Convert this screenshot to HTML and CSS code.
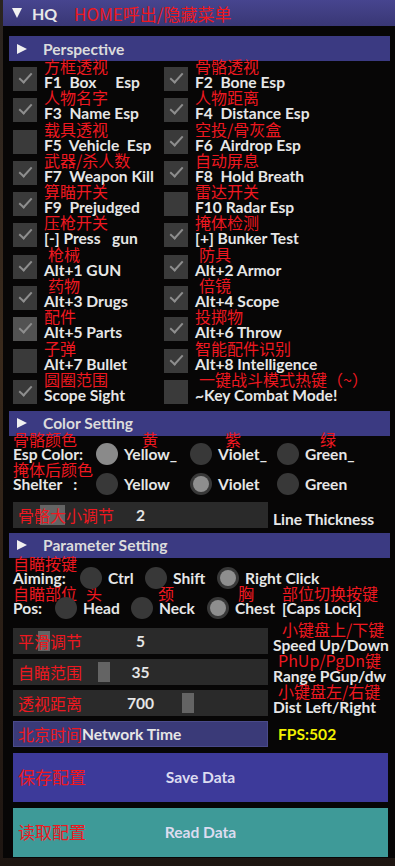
FILE: index.html
```html
<!DOCTYPE html>
<html lang="zh">
<head>
<meta charset="utf-8">
<title>HQ</title>
<link rel="stylesheet" href="styles.css">
</head>
<body>
<div class="window">
  <div class="titlebar">
    <span class="tri-down"></span>
    <span class="title">HQ</span>
    <span class="note title-note">HOME呼出/隐藏菜单</span>
  </div>
  <div class="content">
    <div class="header"><span class="tri-right"></span><span>Perspective</span></div>
    <div class="checks">
      <div class="cell"><span class="box on"></span><div class="stack"><span class="note">方框透视</span><span class="txt">F1  Box     Esp</span></div></div>
      <div class="cell"><span class="box on"></span><div class="stack"><span class="note">骨骼透视</span><span class="txt">F2  Bone Esp</span></div></div>
      <div class="cell"><span class="box on"></span><div class="stack"><span class="note">人物名字</span><span class="txt">F3  Name Esp</span></div></div>
      <div class="cell"><span class="box on"></span><div class="stack"><span class="note">人物距离</span><span class="txt">F4  Distance Esp</span></div></div>
      <div class="cell"><span class="box"></span><div class="stack"><span class="note">载具透视</span><span class="txt">F5  Vehicle  Esp</span></div></div>
      <div class="cell"><span class="box on"></span><div class="stack"><span class="note">空投/骨灰盒</span><span class="txt">F6  Airdrop Esp</span></div></div>
      <div class="cell"><span class="box on"></span><div class="stack"><span class="note">武器/杀人数</span><span class="txt">F7  Weapon Kill</span></div></div>
      <div class="cell"><span class="box on"></span><div class="stack"><span class="note">自动屏息</span><span class="txt">F8  Hold Breath</span></div></div>
      <div class="cell"><span class="box on"></span><div class="stack"><span class="note">算瞄开关</span><span class="txt">F9  Prejudged</span></div></div>
      <div class="cell"><span class="box"></span><div class="stack"><span class="note">雷达开关</span><span class="txt">F10 Radar Esp</span></div></div>
      <div class="cell"><span class="box on"></span><div class="stack"><span class="note">压枪开关</span><span class="txt">[-] Press   gun</span></div></div>
      <div class="cell"><span class="box on"></span><div class="stack"><span class="note">掩体检测</span><span class="txt">[+] Bunker Test</span></div></div>
      <div class="cell"><span class="box on"></span><div class="stack"><span class="note ind">枪械</span><span class="txt">Alt+1 GUN</span></div></div>
      <div class="cell"><span class="box on"></span><div class="stack"><span class="note ind">防具</span><span class="txt">Alt+2 Armor</span></div></div>
      <div class="cell"><span class="box on"></span><div class="stack"><span class="note ind">药物</span><span class="txt">Alt+3 Drugs</span></div></div>
      <div class="cell"><span class="box on"></span><div class="stack"><span class="note ind">倍镜</span><span class="txt">Alt+4 Scope</span></div></div>
      <div class="cell"><span class="box on hover"></span><div class="stack"><span class="note">配件</span><span class="txt">Alt+5 Parts</span></div></div>
      <div class="cell"><span class="box on"></span><div class="stack"><span class="note">投掷物</span><span class="txt">Alt+6 Throw</span></div></div>
      <div class="cell"><span class="box"></span><div class="stack"><span class="note">子弹</span><span class="txt">Alt+7 Bullet</span></div></div>
      <div class="cell"><span class="box on"></span><div class="stack"><span class="note">智能配件识别</span><span class="txt">Alt+8 Intelligence</span></div></div>
      <div class="cell"><span class="box on"></span><div class="stack"><span class="note">圆圈范围</span><span class="txt">Scope Sight</span></div></div>
      <div class="cell"><span class="box"></span><div class="stack"><span class="note ind">一键战斗模式热键（~）</span><span class="txt">~Key Combat Mode!</span></div></div>
    </div>

    <div class="header h-color"><span class="tri-right"></span><span>Color Setting</span></div>
    <div class="radios color-rows">
      <div class="stack"><span class="note">骨骼颜色</span><span class="txt">Esp Color:</span></div>
      <div class="stack"><span class="note off-y">黄</span><span class="opt"><span class="dot sel-full"></span><span class="txt">Yellow_</span></span></div>
      <div class="stack"><span class="note off-v">紫</span><span class="opt"><span class="dot"></span><span class="txt">Violet_</span></span></div>
      <div class="stack"><span class="note off-g">绿</span><span class="opt"><span class="dot"></span><span class="txt">Green_</span></span></div>
      <div class="stack"><span class="note">掩体后颜色</span><span class="txt">Shelter &nbsp;&nbsp;:</span></div>
      <div class="stack"><span class="note"></span><span class="opt"><span class="dot"></span><span class="txt">Yellow</span></span></div>
      <div class="stack"><span class="note"></span><span class="opt"><span class="dot sel"></span><span class="txt">Violet</span></span></div>
      <div class="stack"><span class="note"></span><span class="opt"><span class="dot"></span><span class="txt">Green</span></span></div>
    </div>
    <div class="srow first-slider">
      <div class="frame"><span class="grab" style="left:27px"></span><span class="note fnote">骨骼大小调节</span><span class="val">2</span></div>
      <div class="rcell"><span class="txt">Line Thickness</span></div>
    </div>

    <div class="header h-param"><span class="tri-right"></span><span>Parameter Setting</span></div>
    <div class="radios aim-rows">
      <div class="stack"><span class="note">自瞄按键</span><span class="txt">Aiming:</span></div>
      <div class="stack"><span class="note"></span><span class="opt"><span class="dot"></span><span class="txt">Ctrl</span></span></div>
      <div class="stack"><span class="note"></span><span class="opt"><span class="dot"></span><span class="txt">Shift</span></span></div>
      <div class="stack"><span class="note"></span><span class="opt"><span class="dot sel"></span><span class="txt">Right Click</span></span></div>
    </div>
    <div class="radios pos-rows">
      <div class="stack"><span class="note">自瞄部位</span><span class="txt">Pos:</span></div>
      <div class="stack"><span class="note off-h">头</span><span class="opt"><span class="dot"></span><span class="txt">Head</span></span></div>
      <div class="stack"><span class="note off-n">颈</span><span class="opt"><span class="dot"></span><span class="txt">Neck</span></span></div>
      <div class="stack"><span class="note off-c">胸</span><span class="opt"><span class="dot sel"></span><span class="txt">Chest</span></span></div>
      <div class="stack"><span class="note">部位切换按键</span><span class="txt">[Caps Lock]</span></div>
    </div>
    <div class="sliders">
      <div class="srow">
        <div class="frame"><span class="grab small" style="left:25px"></span><span class="note fnote">平滑调节</span><span class="val">5</span></div>
        <div class="rcell"><span class="note rnote r1">小键盘上/下键</span><span class="txt">Speed Up/Down</span></div>
      </div>
      <div class="srow">
        <div class="frame"><span class="grab small" style="left:85px"></span><span class="note fnote">自瞄范围</span><span class="val">35</span></div>
        <div class="rcell"><span class="note rnote">PhUp/PgDn键</span><span class="txt">Range PGup/dw</span></div>
      </div>
      <div class="srow">
        <div class="frame"><span class="grab small" style="left:169px"></span><span class="note fnote">透视距离</span><span class="val">700</span></div>
        <div class="rcell"><span class="note rnote">小键盘左/右键</span><span class="txt">Dist Left/Right</span></div>
      </div>
      <div class="srow">
        <div class="netbar"><span class="note">北京时间</span><span class="txt">Network Time</span></div>
        <div class="rcell fps-cell"><span class="fps">FPS:502</span></div>
      </div>
    </div>
    <div class="btn save"><span class="note bnote">保存配置</span><span class="btxt">Save Data</span></div>
    <div class="btn read"><span class="note bnote">读取配置</span><span class="btxt">Read Data</span></div>
  </div>
</div>
</body>
</html>
```
FILE: styles.css
```css
* { box-sizing: border-box; margin: 0; padding: 0; }
html, body { width: 395px; height: 866px; overflow: hidden; }
body {
  background: linear-gradient(180deg, #2a2420 0%, #3a2a1c 40%, #1e1612 100%);
  font-family: Lato, "Liberation Sans", sans-serif;
  color: #e6e6e6;
}
.window {
  margin-left: 3px;
  width: 392px;
  height: 858px;
  background: #070606;
}
.titlebar {
  height: 26px;
  background: linear-gradient(180deg, #47458f 0%, #393775 100%);
  display: flex;
  align-items: center;
  padding-left: 9px;
}
.tri-down {
  width: 0; height: 0;
  border-left: 5px solid transparent;
  border-right: 5px solid transparent;
  border-top: 10px solid #f2f2f2;
  margin-right: 10px;
}
.title { font-weight: 700; font-size: 16px; color: #e8e8e8; width: 42px; }
.note {
  font-family: "Noto Sans CJK SC", sans-serif;
  font-weight: 400;
  font-size: 16px;
  color: #ee1820;
  white-space: pre;
}
.title-note { font-size: 17px; }
.content { padding: 10px 7px 0 10px; }
.header {
  height: 25px;
  margin: 0 -2px 0 -4px;
  background: #3b3a82;
  display: flex;
  align-items: center;
  padding-left: 8px;
  font-weight: 700;
  font-size: 15.6px;
  color: #dcdcdc;
}
.tri-right {
  width: 0; height: 0;
  border-top: 5px solid transparent;
  border-bottom: 5px solid transparent;
  border-left: 10px solid #f0f0f0;
  margin-right: 16px;
}
.checks {
  margin-top: 6px;
  display: grid;
  grid-template-columns: 151px 1fr;
  row-gap: 7.3px;
}
.cell { display: flex; height: 24px; gap: 7px; }
.box {
  flex: none;
  width: 24px; height: 24px;
  background: #3a3a3a;
  position: relative;
}
.box.hover { background: #525252; }
.box.on::after {
  content: "";
  position: absolute;
  left: 6px; top: 6px;
  width: 11px; height: 5px;
  border-left: 2.2px solid #8e8e8e;
  border-bottom: 2.2px solid #8e8e8e;
  transform: rotate(-48deg);
}
.stack { display: flex; flex-direction: column; }
.stack .note { line-height: 16px; height: 16px; margin-top: -9px; }
.stack .txt { line-height: 16px; }
.txt { font-weight: 700; font-size: 15.6px; white-space: pre; color: #e6e6e6; }
.ind { padding-left: 4px; }

.h-color { margin-top: 7px; }
.radios { display: grid; }
.radios .stack .note { line-height: 14px; height: 14px; margin-top: 0; }
.radios .stack .txt { line-height: 16px; }
.color-rows { grid-template-columns: 83px 94px 87px 1fr; margin-top: -4px; }
.opt { display: flex; align-items: center; height: 16px; }
.dot {
  flex: none;
  width: 22px; height: 22px;
  border-radius: 50%;
  background: #383838;
  margin-right: 6px;
  position: relative;
}
.dot.sel-full { background: #8a8a8a; }
.dot.sel::after {
  content: "";
  position: absolute;
  inset: 3px;
  border-radius: 50%;
  background: #8e8e8e;
}
.off-y { padding-left: 46px; }
.off-v { padding-left: 35px; }
.off-g { padding-left: 43px; }

.srow { display: flex; align-items: flex-start; gap: 5px; }
.first-slider { margin-top: 10px; }
.frame {
  width: 255px; height: 26px;
  background: #2a2a2a;
  position: relative;
  display: flex; align-items: center; justify-content: center;
  flex: none;
}
.fnote { position: absolute; left: 5px; top: 2px; line-height: 22px; }
.grab {
  position: absolute; top: 3px;
  width: 25px; height: 20px;
  background: #646464;
}
.grab.small { width: 12px; }
.val { font-weight: 700; font-size: 15.6px; color: #e6e6e6; position: relative; }
.rcell { display: flex; flex-direction: column; justify-content: flex-end; height: 26px; }
.rcell .txt { line-height: 18px; }
.rnote { line-height: 14px; height: 14px; margin-top: -6px; padding-left: 5px; }
.r1 { padding-left: 9px; }

.h-param { margin-top: 5px; }
.aim-rows { grid-template-columns: 67px 65px 72px 1fr; margin-top: -2px; }
.pos-rows { grid-template-columns: 42px 76px 76px 75px 1fr; }
.off-h { padding-left: 31px; }
.off-n { padding-left: 27px; }
.off-c { padding-left: 31px; }
.sliders { margin-top: 12px; display: flex; flex-direction: column; gap: 5px; }
.netbar {
  width: 255px; height: 26px; flex: none;
  background: #3a3a78;
  border: 1px solid #4a4a8a;
  display: flex; align-items: center;
  padding-left: 4px;
}
.netbar .note { line-height: 22px; }
.fps-cell { justify-content: center; padding-left: 5px; }
.fps { font-weight: 700; font-size: 15.6px; color: #f2f000; line-height: 18px; }
.btn {
  height: 49px;
  display: flex; align-items: center;
  position: relative;
  justify-content: center;
}
.btn.save { margin-top: 6px; background: #3d3a9a; }
.btn.read { margin-top: 6px; background: #3e9a98; }
.bnote { position: absolute; left: 5px; top: 13px; line-height: 22px; font-size: 17px; }
.btxt { font-weight: 700; font-size: 15.6px; color: #dcdcf0; }
```
